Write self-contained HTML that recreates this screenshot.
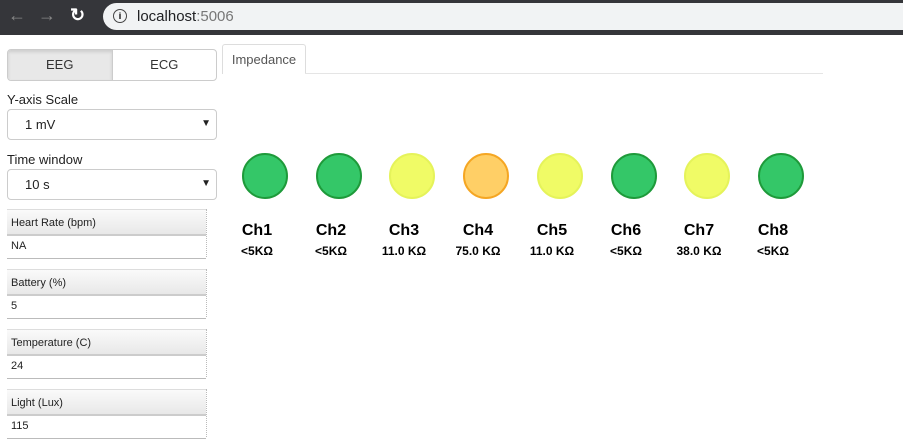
<!DOCTYPE html>
<html><head><style>
body{margin:0;width:903px;height:444px;background:#fff;font-family:"Liberation Sans",sans-serif;position:relative;overflow:hidden}
.bar{position:absolute;left:0;top:0;width:903px;height:35px;background:#35363a}
.url{position:absolute;left:103px;top:3px;width:820px;height:27px;background:#f1f3f4;border-radius:14px}
.url span{position:absolute;left:34px;top:5px;font-size:15px;color:#202124}
.ab{position:absolute;font-size:18px;color:#888}
.abs{position:absolute}
.btns{left:7px;top:49px;width:208px;height:30px;border:1px solid #ccc;border-radius:4px;overflow:hidden;display:flex;font-size:13px;color:#333}
.btns div{flex:1;text-align:center;line-height:30px}
.lbl{font-size:13px;color:#222}
.sel{left:7px;width:208px;height:29px;border:1px solid #ccc;border-radius:4px;font-size:13px;color:#222}
.sel span{position:absolute;left:17px;top:7px}
.sel b{position:absolute;right:5px;top:8px;font-size:10px}
.box{left:7px;width:199px;height:48px;border-right:1px dotted #bbb}
.box .h{height:24px;background:linear-gradient(#fafafa,#e8e8e8);border-bottom:2px solid #ccc;font-size:11px;line-height:26px;padding-left:4px;color:#222;border-top:1px solid #ddd}
.box .v{height:22px;font-size:11px;line-height:20px;padding-left:4px;border-bottom:1px solid #bbb;color:#222}
.c{position:absolute;width:42px;height:42px;border-radius:50%;top:153px}
.g{background:#34c768;border:2px solid #1e9a3a}
.y{background:#f0fb66;border:2px solid #e5f35a}
.o{background:#ffcf66;border:2px solid #f5a623}
.t{position:absolute;width:70px;text-align:center;font-weight:bold;margin-left:-7px}
</style></head><body>
<div class="bar"></div>
<div class="ab" style="left:8px;top:5px">&#8592;</div>
<div class="ab" style="left:38px;top:5px">&#8594;</div>
<div class="ab" style="left:70px;top:5px;color:#fff;font-weight:bold">&#8635;</div>
<div class="url"><div style="position:absolute;left:10px;top:6px;width:12px;height:12px;border:1.5px solid #444;border-radius:50%;font-size:9px;text-align:center;line-height:12px;font-weight:bold">i</div><span>localhost<span style="position:static;color:#777">:5006</span></span></div>
<div class="abs btns"><div style="background:#e8e8e8;box-shadow:inset 0 2px 3px rgba(0,0,0,.12);border-right:1px solid #ccc">EEG</div><div>ECG</div></div>
<div class="abs" style="left:222px;top:44px;width:82px;height:29px;border:1px solid #ddd;border-bottom:none;border-radius:3px 3px 0 0;font-size:13px;color:#555;text-align:center;line-height:30px">Impedance</div>
<div class="abs" style="left:305px;top:73px;width:518px;height:1px;background:#e5e5e5"></div>
<div class="abs lbl" style="left:7px;top:92px">Y-axis Scale</div>
<div class="abs sel" style="top:109px"><span>1 mV</span><b>&#9660;</b></div>
<div class="abs lbl" style="left:7px;top:152px">Time window</div>
<div class="abs sel" style="top:169px"><span>10 s</span><b>&#9660;</b></div>
<div class="abs box" style="top:209px"><div class="h">Heart Rate (bpm)</div><div class="v">NA</div></div>
<div class="abs box" style="top:269px"><div class="h">Battery (%)</div><div class="v">5</div></div>
<div class="abs box" style="top:329px"><div class="h">Temperature (C)</div><div class="v">24</div></div>
<div class="abs box" style="top:389px"><div class="h">Light (Lux)</div><div class="v">115</div></div>
<div class="c g" style="left:242px"></div><div class="c g" style="left:316px"></div><div class="c y" style="left:389px"></div><div class="c o" style="left:463px"></div><div class="c y" style="left:537px"></div><div class="c g" style="left:611px"></div><div class="c y" style="left:684px"></div><div class="c g" style="left:758px"></div>
<div class="t" style="left:229px;top:222px;font-size:16px">Ch1</div><div class="t" style="left:229px;top:244px;font-size:12px">&lt;5KΩ</div>
<div class="t" style="left:303px;top:222px;font-size:16px">Ch2</div><div class="t" style="left:303px;top:244px;font-size:12px">&lt;5KΩ</div>
<div class="t" style="left:376px;top:222px;font-size:16px">Ch3</div><div class="t" style="left:369px;width:84px;top:244px;font-size:12px">11.0 KΩ</div>
<div class="t" style="left:450px;top:222px;font-size:16px">Ch4</div><div class="t" style="left:443px;width:84px;top:244px;font-size:12px">75.0 KΩ</div>
<div class="t" style="left:524px;top:222px;font-size:16px">Ch5</div><div class="t" style="left:517px;width:84px;top:244px;font-size:12px">11.0 KΩ</div>
<div class="t" style="left:598px;top:222px;font-size:16px">Ch6</div><div class="t" style="left:598px;top:244px;font-size:12px">&lt;5KΩ</div>
<div class="t" style="left:671px;top:222px;font-size:16px">Ch7</div><div class="t" style="left:664px;width:84px;top:244px;font-size:12px">38.0 KΩ</div>
<div class="t" style="left:745px;top:222px;font-size:16px">Ch8</div><div class="t" style="left:745px;top:244px;font-size:12px">&lt;5KΩ</div>
</body></html>
